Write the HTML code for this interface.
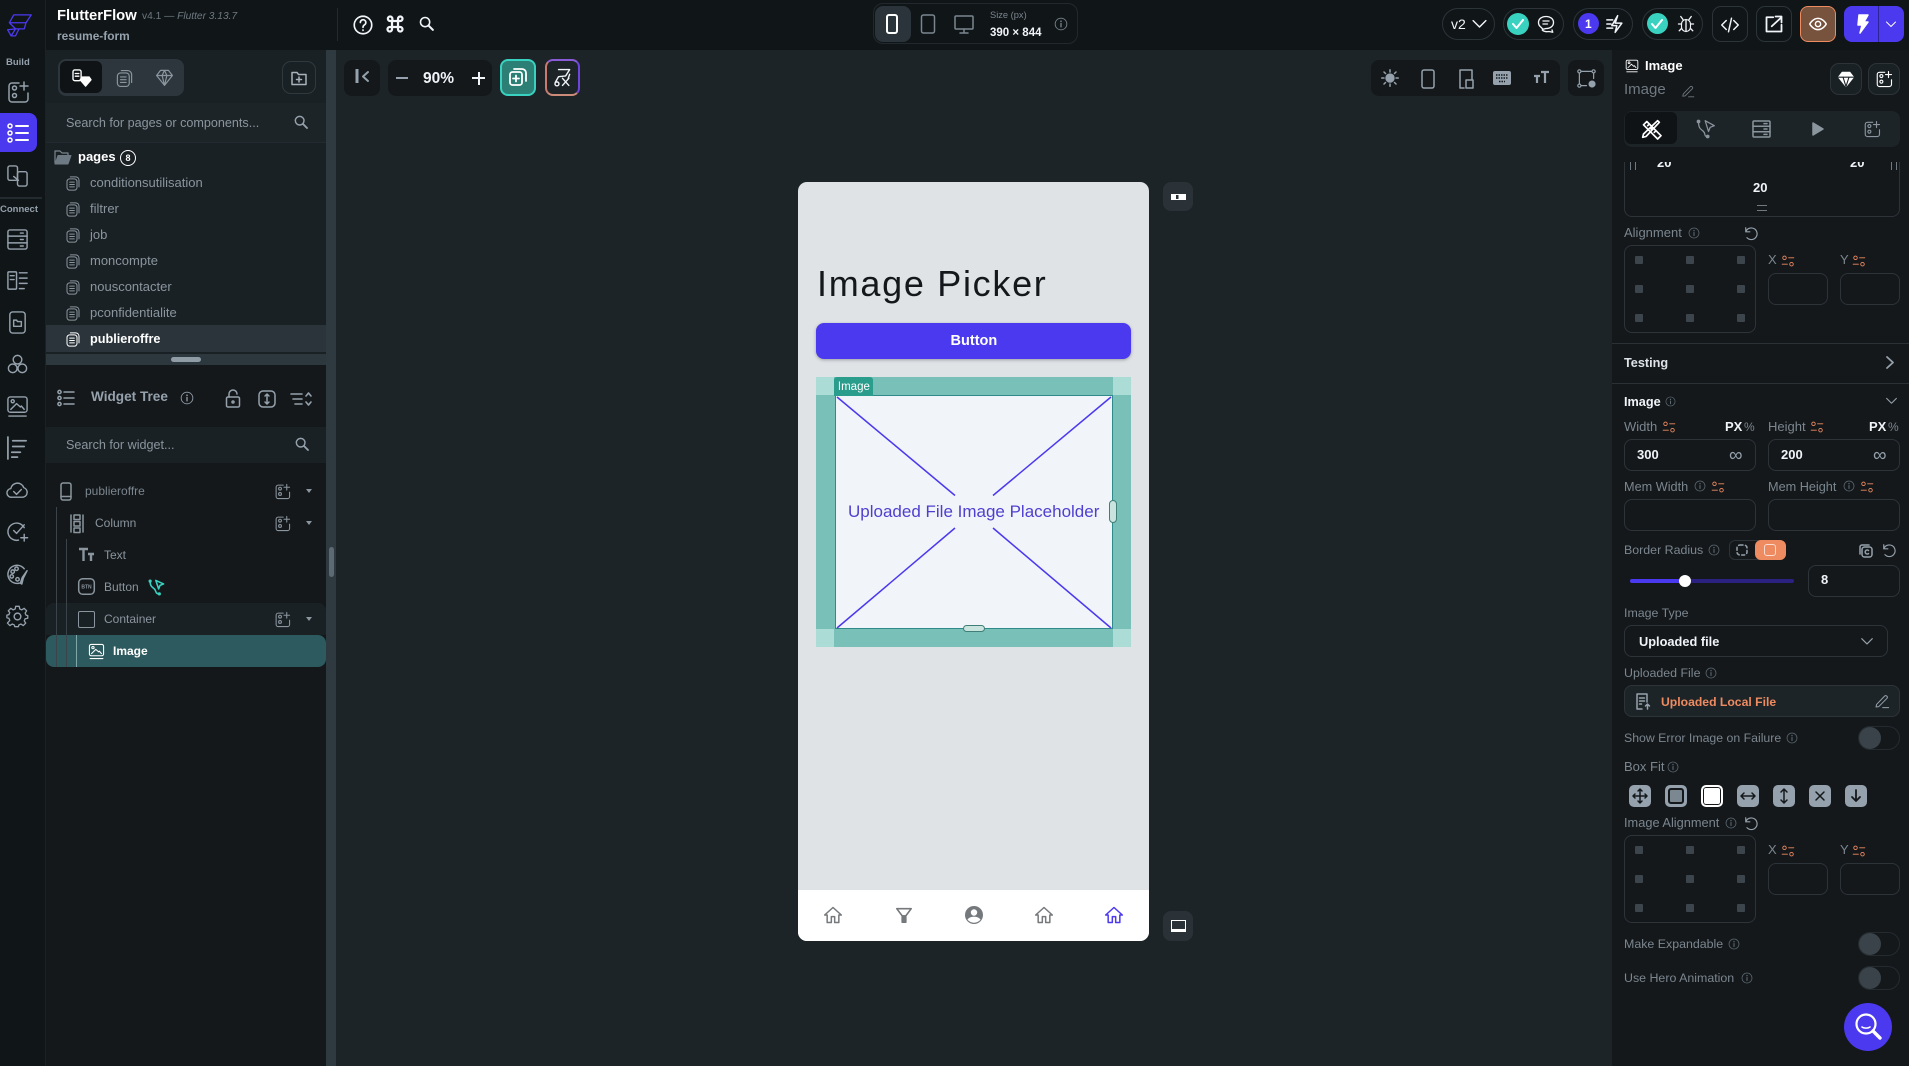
<!DOCTYPE html>
<html><head><meta charset="utf-8"><title>FlutterFlow</title>
<style>
html,body{margin:0;padding:0;width:1909px;height:1066px;overflow:hidden;background:#1d2428}
body{position:relative;font-family:"Liberation Sans",sans-serif;color:#95a1ac}
div,span.t,svg{position:absolute}
.t{position:absolute;white-space:nowrap;line-height:20px;height:20px;font-size:13px}
.b{font-weight:700}
.w{color:#fff}
.g{color:#8a959e}
.d{color:#7b868f}
svg{fill:none;stroke:currentColor;stroke-width:1.5;stroke-linecap:round;stroke-linejoin:round;overflow:visible}
.o{color:#ee8b60}
.box{border:1px solid #2c343a;border-radius:8px;box-sizing:border-box}
.dot{width:8px;height:8px;background:#3c454c;border-radius:1px}
.sw{width:42px;height:24px;border:1px solid #242b30;border-radius:12px;box-sizing:border-box}
.sw:after{content:"";position:absolute;left:0;top:0;width:22px;height:22px;border-radius:50%;background:#3a434a}
.fit{width:22px;height:22px;background:#95a1ac;border-radius:5px;top:785px;color:#14181b}
</style></head><body>
<svg width="0" height="0" style="left:0;top:0"><defs>
<symbol id="cell" viewBox="0 0 24 24"><path d="M13 3H6a3 3 0 0 0-3 3v13a3 3 0 0 0 3 3h13a3 3 0 0 0 3-3v-6"/><circle cx="8.5" cy="8" r="2"/><circle cx="8.5" cy="15.500" r="2"/><path d="M18 2v8M14 6h8"/></symbol>
<symbol id="pg" viewBox="0 0 24 24"><rect x="3" y="5" width="15" height="17" rx="4"/><path d="M8 2h8a5 5 0 0 1 5 5v10M7 10h7M7 13.500h7M7 17h7"/></symbol>
<symbol id="sr" viewBox="0 0 24 24"><circle cx="10" cy="10" r="6.500" stroke-width="2.200"/><path d="M15 15l6 6" stroke-width="2.800"/></symbol>
<symbol id="info" viewBox="0 0 24 24"><circle cx="12" cy="12" r="10"/><path d="M12 11v6" stroke-width="2.200"/><path d="M12 7v.5" stroke-width="2.600"/></symbol>
<symbol id="tune" viewBox="0 0 24 24"><circle cx="6" cy="6.500" r="3"/><path d="M13 6.500h9M2 17.500h9"/><circle cx="18" cy="17.500" r="3"/></symbol>
<symbol id="pen" viewBox="0 0 24 24"><path d="M4 17L16 4.500a2.500 2.500 0 0 1 3.500 3.500L7 20.500l-4 .5zM13 22h9"/></symbol>
<symbol id="chev" viewBox="0 0 24 24"><path d="M3 8l9 9 9-9" stroke-width="2"/></symbol>
<symbol id="img" viewBox="0 0 24 24"><rect x="2" y="2" width="20" height="16" rx="2.500"/><circle cx="7" cy="6.500" r="1.600"/><path d="M5 15l6-6 4 3.500 1-1 3 3.500M3 22h18"/></symbol>
<symbol id="gem" viewBox="0 0 24 24"><path d="M7 3h10l5 6.500L12 22 2 9.500zM2 9.500h20M9 9.500L12 22l3-12.500M9 9.500L12 3l3 6.500"/></symbol>
<symbol id="home" viewBox="0 0 24 24"><path d="M12 3L2 12h3v9h5v-7h4v7h5v-9h3z" stroke-width="1.800"/></symbol>
</defs></svg>

<!-- panels -->
<div style="left:0;top:0;width:1909px;height:50px;background:#101518"></div>
<div style="left:0;top:0;width:46px;height:1066px;background:#101518;border-right:1px solid #1b2226;box-sizing:border-box"></div>
<div style="left:46px;top:50px;width:280px;height:304px;background:#1a2125"></div>
<div style="left:46px;top:103px;width:280px;height:39px;background:#1d2428"></div>
<div style="left:46px;top:142px;width:280px;height:1px;background:#232b30"></div>
<div style="left:46px;top:325px;width:280px;height:27px;background:#2a343a"></div>
<div style="left:46px;top:354px;width:280px;height:11px;background:#2c383e"></div>
<div style="left:171px;top:357px;width:30px;height:5px;border-radius:3px;background:#8f9ca6"></div>
<div style="left:46px;top:365px;width:280px;height:701px;background:#14181b"></div>
<div style="left:326px;top:50px;width:10px;height:1016px;background:#2f3a40"></div>
<div style="left:329px;top:547px;width:5px;height:30px;border-radius:3px;background:#5d6a73"></div>
<div style="left:1612px;top:50px;width:297px;height:1016px;background:#14181b"></div>

<!-- rail -->
<svg style="left:5px;top:11px;color:#4b39ef" width="28" height="27" viewBox="0 0 32 30"><path d="M10 4h20l-6 9H5zM5 13l7 7h10l2-7M12 20l-5 8-4-7zM12 20l-5 8h5l4-8"/></svg>
<span class="t b" style="left:6px;top:53px;font-size:9.500px;color:#95a1ac">Build</span>
<svg style="left:6px;top:80px;color:#95a1ac" width="24" height="24"><use href="#cell"/></svg>
<div style="left:0;top:113px;width:37px;height:39px;background:#4b39ef;border-radius:0 8px 8px 0"></div>
<svg style="left:6px;top:121px;color:#fff" width="24" height="24" viewBox="0 0 24 24"><circle cx="4" cy="5" r="2"/><circle cx="4" cy="12" r="2"/><circle cx="4" cy="19" r="2"/><path d="M10 5h12M10 12h12M10 19h12" stroke-width="2"/></svg>
<svg style="left:6px;top:164px;color:#95a1ac" width="23" height="23" viewBox="0 0 24 24"><rect x="2" y="2" width="10" height="15" rx="2"/><rect x="12" y="8" width="10" height="15" rx="2" /><path d="M8 13l5 4"/></svg>
<div style="left:0;top:197px;width:42px;height:2px;background:#232b30"></div>
<span class="t b" style="left:0;top:200px;font-size:9.500px;color:#95a1ac">Connect</span>
<svg style="left:6px;top:228px;color:#95a1ac" width="23" height="23" viewBox="0 0 24 24"><rect x="2" y="2" width="20" height="20" rx="2"/><path d="M2 8.500h20M2 15.500h20M15 5.300h3M15 12h3M15 18.800h3"/></svg>
<svg style="left:6px;top:269px;color:#95a1ac" width="23" height="23" viewBox="0 0 24 24"><rect x="2" y="3" width="9" height="18" rx="1"/><path d="M4.500 7h4M4.500 11h4M14 4h8M14 9.500h8M14 15h8M14 20.500h5"/></svg>
<svg style="left:6px;top:311px;color:#95a1ac" width="23" height="23" viewBox="0 0 24 24"><rect x="4" y="1" width="16" height="22" rx="3"/><path d="M8 9.500h3l1 1.500h4v5H8z"/></svg>
<svg style="left:6px;top:353px;color:#95a1ac" width="23" height="23" viewBox="0 0 24 24"><circle cx="12" cy="7" r="4.500"/><circle cx="7" cy="16" r="4.500"/><circle cx="17" cy="16" r="4.500"/></svg>
<svg style="left:6px;top:395px;color:#95a1ac" width="23" height="23"><use href="#img"/></svg>
<svg style="left:6px;top:436px;color:#95a1ac" width="23" height="23" viewBox="0 0 24 24"><path d="M2 1v23M7 5h14M7 11h12M6 17h9M6 22h6" stroke-width="1.800"/></svg>
<svg style="left:6px;top:479px;color:#95a1ac" width="23" height="23" viewBox="0 0 24 24"><path d="M6 19a4.500 4.500 0 0 1-1-9 7 7 0 0 1 13.500-1A5.200 5.200 0 0 1 18 19zM8 13l3 3 5-5"/></svg>
<svg style="left:6px;top:520px;color:#95a1ac" width="23" height="23" viewBox="0 0 24 24"><path d="M19 8a9 9 0 1 0-6 13M8 11l3 3 8-9M19 15v7M15.500 18.500h7"/></svg>
<svg style="left:6px;top:563px;color:#95a1ac" width="23" height="23" viewBox="0 0 24 24"><path d="M14 21A9.500 9.500 0 1 1 19 6"/><circle cx="7" cy="9" r="1.800"/><circle cx="6" cy="14" r="1.800"/><circle cx="11" cy="6" r="1.800"/><circle cx="12" cy="17" r="1.800"/><path d="M22 8l-4 8-1.500 6-1.500-1 2-6z"/></svg>
<svg style="left:6px;top:605px;color:#95a1ac" width="23" height="23" viewBox="0 0 24 24"><circle cx="12" cy="12" r="3.500"/><path d="M10 2h4l.6 3 2.400 1 2.600-1.700 2.800 2.800L20.700 9.700l1 2.300 2 .5v3l-3 .6-1 2.400 1.700 2.500-2.800 2.800-2.600-1.700-2.400 1-.6 2h-4l-.6-2-2.400-1-2.600 1.700-2.800-2.800L3.300 18 2.300 15.500 0 15v-3l2.300-.5 1-2.300L1.600 7.100l2.800-2.800L7 6l2.400-1z" transform="scale(.92) translate(1 -.5)"/></svg>

<!-- header -->
<span class="t b w" style="left:57px;top:5.500px;font-size:14.800px">FlutterFlow</span>
<span class="t" style="left:142px;top:6.500px;font-size:10.200px;color:#6f7a82">v4.1 — <i>Flutter 3.13.7</i></span>
<span class="t b" style="left:57px;top:26px;font-size:11.900px;color:#95a1ac">resume-form</span>
<div style="left:337px;top:8px;width:1px;height:33px;background:#232b30"></div>
<svg style="left:353px;top:15px;color:#f1f4f8" width="20" height="20" viewBox="0 0 24 24"><circle cx="12" cy="12" r="10.500" stroke-width="2"/><path d="M8.800 9a3.300 3.300 0 1 1 5 2.800c-1.200.8-1.800 1.500-1.800 3M12 18v.5" stroke-width="2"/></svg>
<svg style="left:386px;top:15px;color:#f1f4f8" width="18" height="18" viewBox="0 0 24 24"><path d="M8 8h8v8H8zM8 8H5.500a3 3 0 1 1 3-3v3M16 8V5a3 3 0 1 1 3 3h-3M16 16h3a3 3 0 1 1-3 3v-3M8 16v3a3 3 0 1 1-3-3h3" stroke-width="3"/></svg>
<svg style="left:418px;top:15px;color:#f1f4f8" width="17" height="17"><use href="#sr"/></svg>

<!-- device group -->
<div class="box" style="left:873px;top:3px;width:205px;height:41px;border-radius:10px;border-color:#22292e"></div>
<div style="left:875px;top:6px;width:36px;height:36px;background:#2a343a;border-radius:8px"></div>
<svg style="left:883px;top:14px;color:#fff" width="18" height="20" viewBox="0 0 18 20"><rect x="4" y="1" width="10" height="18" rx="2" stroke-width="2"/></svg>
<svg style="left:919px;top:14px;color:#7b868f" width="18" height="20" viewBox="0 0 18 20"><rect x="2.500" y="1" width="13" height="18" rx="2"/></svg>
<svg style="left:954px;top:15px;color:#7b868f" width="20" height="20" viewBox="0 0 20 20"><rect x="1" y="1" width="18" height="13" rx="1"/><path d="M10 14v3M6 18h8"/></svg>
<span class="t" style="left:990px;top:5px;font-size:9.300px;color:#7b868f">Size (px)</span>
<span class="t b" style="left:990px;top:23px;font-size:11.500px;color:#f1f4f8">390 × 844</span>
<svg style="left:1054px;top:17px;color:#7b868f" width="14" height="14"><use href="#info"/></svg>

<!-- right header controls -->
<div class="box" style="left:1442px;top:8px;width:53px;height:32px;border-radius:16px"></div>
<span class="t" style="left:1451px;top:14px;font-size:14px;color:#f1f4f8">v2</span>
<svg style="left:1471px;top:15px;color:#f1f4f8" width="17" height="17"><use href="#chev"/></svg>
<div class="box" style="left:1503px;top:8px;width:61px;height:32px;border-radius:16px"></div>
<div style="left:1507px;top:13px;width:22px;height:22px;border-radius:50%;background:#39d2c0"></div>
<svg style="left:1511px;top:17px;color:#fff" width="14" height="14" viewBox="0 0 14 14"><path d="M2 7l3.500 4L12 3" stroke-width="2"/></svg>
<svg style="left:1537px;top:15px;color:#f1f4f8" width="18" height="18" viewBox="0 0 24 24"><path d="M12 2c5.500 0 10 3 10 8s-4.500 8-10 8l-4 1-3-3C3 14.500 2 12.500 2 10c0-5 4.500-8 10-8zM8 8h8M8 12h6M7 20c2 2 6 2.500 9 2l5 1-1-3" stroke-width="1.800"/></svg>
<div class="box" style="left:1573px;top:8px;width:60px;height:32px;border-radius:16px"></div>
<div style="left:1578px;top:13px;width:21px;height:21px;border-radius:50%;background:#4b39ef"></div>
<span class="t b w" style="left:1585px;top:14px;font-size:12px">1</span>
<svg style="left:1606px;top:14px;color:#f1f4f8" width="20" height="20" viewBox="0 0 24 24"><path d="M14 2l-3 9h8l-8 11 2-8H7zM1 7h7M1 12h5M1 17h7" stroke-width="1.800"/></svg>
<div class="box" style="left:1642px;top:8px;width:61px;height:32px;border-radius:16px"></div>
<div style="left:1647px;top:13px;width:21px;height:21px;border-radius:50%;background:#39d2c0"></div>
<svg style="left:1650px;top:17px;color:#fff" width="14" height="14" viewBox="0 0 14 14"><path d="M2 7l3.500 4L12 3" stroke-width="2"/></svg>
<svg style="left:1677px;top:15px;color:#f1f4f8" width="18" height="18" viewBox="0 0 24 24"><rect x="6" y="6" width="12" height="16" rx="6"/><path d="M12 6v16M6 12H2M18 12h4M6 18l-3 3M18 18l3 3M8 6L5 2M16 6l3-4" stroke-width="1.800"/></svg>
<div class="box" style="left:1712px;top:6px;width:36px;height:36px;border-radius:9px"></div>
<svg style="left:1721px;top:16px;color:#f1f4f8" width="18" height="18" viewBox="0 0 24 24"><path d="M7 6l-6 6 6 6M17 6l6 6-6 6M14 3l-4 18" stroke-width="2"/></svg>
<div class="box" style="left:1756px;top:6px;width:36px;height:36px;border-radius:9px"></div>
<svg style="left:1765px;top:15px;color:#f1f4f8" width="18" height="18" viewBox="0 0 24 24"><path d="M11 3H2v19h20v-9" stroke-width="2.400"/><path d="M9 15L22 3M14 2h8v8" stroke-width="2.400"/></svg>
<div style="left:1800px;top:6px;width:36px;height:36px;box-sizing:border-box;border-radius:8px;background:#77523d;border:1.500px solid #ee8b60"></div>
<svg style="left:1809px;top:15px;color:#fff" width="18" height="18" viewBox="0 0 24 24"><path d="M1 12s4-7.500 11-7.500S23 12 23 12s-4 7.500-11 7.500S1 12 1 12z" stroke-width="2"/><circle cx="12" cy="12" r="3.500" stroke-width="2"/></svg>
<div style="left:1844px;top:6px;width:60px;height:36px;border-radius:8px;background:#4b39ef"></div>
<div style="left:1878px;top:6px;width:1px;height:36px;background:#2f2399"></div>
<svg style="left:1855px;top:14px;color:#fff;fill:#fff" width="16" height="20" viewBox="0 0 16 20"><path d="M4 1h9L9 8h4L5 19l2-8H3z" fill="#fff"/></svg>
<svg style="left:1885px;top:18px;color:#fff" width="12" height="12"><use href="#chev"/></svg>

<!-- left panel top -->
<div style="left:58px;top:59px;width:126px;height:37px;border-radius:8px;background:#2c363c"></div>
<div style="left:60px;top:61px;width:42px;height:32px;border-radius:6px;background:#0f1315"></div>
<svg style="left:72px;top:69px;color:#fff" width="20" height="18" viewBox="0 0 22 20"><rect x="1" y="1" width="9" height="12" rx="2"/><path d="M3.500 5h4M3.500 8h4"/><path d="M11 9h8l2 3-6 7-6-7z" fill="#fff" stroke="#fff"/></svg>
<svg style="left:115px;top:69px;color:#8a959e" width="19" height="19"><use href="#pg"/></svg>
<svg style="left:155px;top:68px;color:#8a959e" width="19" height="19"><use href="#gem"/></svg>
<div class="box" style="left:282px;top:61px;width:34px;height:33px;border-radius:9px;border-color:#2f3a40"></div>
<svg style="left:291px;top:70px;color:#a8b2ba" width="16" height="16" viewBox="0 0 16 16"><path d="M1 2.500h5l1.500 2H15v10H1zM8 7v5M5.500 9.500h5"/></svg>
<span class="t g" style="left:66px;top:113px;font-size:12.600px">Search for pages or components...</span>
<svg style="left:293px;top:114px;color:#95a1ac" width="16" height="16"><use href="#sr"/></svg>

<svg style="left:54px;top:149px;color:#7b868f" width="18" height="16" viewBox="0 0 18 16"><path d="M1 14V2h5l2 2h6v2" stroke-width="1.200"/><path d="M4 6.500h13L14 15H1z" fill="#6e7a83" stroke="#6e7a83" stroke-width="1"/></svg>
<span class="t b w" style="left:78px;top:147px">pages</span>
<div style="left:120px;top:150px;width:14px;height:14px;border:1.300px solid #fff;border-radius:50%;font-size:9px;color:#fff;text-align:center;line-height:14px;font-weight:700">8</div>

<svg style="left:65px;top:175px;color:#8a959e" width="16" height="17"><use href="#pg"/></svg>
<span class="t g" style="left:90px;top:173px">conditionsutilisation</span>
<svg style="left:65px;top:201px;color:#8a959e" width="16" height="17"><use href="#pg"/></svg>
<span class="t g" style="left:90px;top:199px">filtrer</span>
<svg style="left:65px;top:227px;color:#8a959e" width="16" height="17"><use href="#pg"/></svg>
<span class="t g" style="left:90px;top:225px">job</span>
<svg style="left:65px;top:253px;color:#8a959e" width="16" height="17"><use href="#pg"/></svg>
<span class="t g" style="left:90px;top:251px">moncompte</span>
<svg style="left:65px;top:279px;color:#8a959e" width="16" height="17"><use href="#pg"/></svg>
<span class="t g" style="left:90px;top:277px">nouscontacter</span>
<svg style="left:65px;top:305px;color:#8a959e" width="16" height="17"><use href="#pg"/></svg>
<span class="t g" style="left:90px;top:303px">pconfidentialite</span>
<svg style="left:65px;top:331px;color:#fff" width="16" height="17"><use href="#pg"/></svg>
<span class="t b w" style="left:90px;top:329px;font-size:12.700px">publieroffre</span>

<!-- widget tree -->
<svg style="left:57px;top:389px;color:#95a1ac" width="18" height="18" viewBox="0 0 18 18"><circle cx="2.500" cy="3" r="1.600"/><circle cx="2.500" cy="9" r="1.600"/><circle cx="2.500" cy="15" r="1.600"/><path d="M7 3h10M7 9h10M7 15h10"/></svg>
<span class="t b" style="left:91px;top:387px;font-size:13.600px;color:#95a1ac">Widget Tree</span>
<svg style="left:180px;top:391px;color:#95a1ac" width="14" height="14"><use href="#info"/></svg>
<svg style="left:225px;top:390px;color:#95a1ac" width="16" height="18" viewBox="0 0 16 18"><rect x="1.500" y="7" width="13" height="10" rx="1.500"/><path d="M4 7V4a4 4 0 0 1 8 0"/><circle cx="8" cy="12" r="1"/></svg>
<svg style="left:258px;top:390px;color:#95a1ac" width="18" height="18" viewBox="0 0 18 18"><rect x="1" y="1" width="16" height="16" rx="4"/><path d="M9 4v10M7 6l2-2 2 2M7 12l2 2 2-2"/></svg>
<svg style="left:290px;top:390px;color:#95a1ac" width="22" height="18" viewBox="0 0 22 18"><path d="M1 4h11M3 9h9M5 14h7M16 6l2.500-3L21 6M16 12l2.500 3 2.500-3" stroke-width="1.600"/></svg>
<div style="left:46px;top:427px;width:280px;height:36px;background:#1a2125"></div>
<span class="t g" style="left:66px;top:435px;font-size:12.600px">Search for widget...</span>
<svg style="left:294px;top:436px;color:#95a1ac" width="16" height="16"><use href="#sr"/></svg>

<div style="left:46px;top:603px;width:280px;height:32px;background:#1a2125;border-radius:8px 8px 0 0"></div>
<div style="left:46px;top:635px;width:280px;height:32px;background:#2d5a5e;border-radius:8px"></div>
<div style="left:56px;top:507px;width:1px;height:160px;background:#3a444a"></div>
<div style="left:66px;top:539px;width:1px;height:128px;background:#3a444a"></div>
<div style="left:76px;top:635px;width:1px;height:32px;background:#7fa6a8"></div>

<svg style="left:59px;top:482px;color:#8a959e" width="14" height="19" viewBox="0 0 14 19"><rect x="2" y="1" width="10" height="17" rx="2"/><path d="M2 14.500h10" stroke-width="1.500"/></svg>
<span class="t" style="left:85px;top:481px;font-size:12px;color:#7b868f">publieroffre</span>
<svg style="left:274px;top:483px;color:#8a959e" width="17" height="17"><use href="#cell"/></svg>
<svg style="left:306px;top:489px;color:#8a959e" width="6" height="4" viewBox="0 0 6 4"><path d="M0 0h6L3 4z" fill="#8a959e" stroke="none"/></svg>

<svg style="left:70px;top:514px;color:#8a959e" width="14" height="19" viewBox="0 0 14 19"><path d="M1 1v17M13 1v17"/><rect x="4" y="1" width="6" height="4.500"/><rect x="4" y="7.500" width="6" height="4.500"/><rect x="4" y="14" width="6" height="4.500"/></svg>
<span class="t" style="left:95px;top:513px;font-size:12px;color:#8a959e">Column</span>
<svg style="left:274px;top:515px;color:#8a959e" width="17" height="17"><use href="#cell"/></svg>
<svg style="left:306px;top:521px" width="6" height="4" viewBox="0 0 6 4"><path d="M0 0h6L3 4z" fill="#8a959e" stroke="none"/></svg>

<svg style="left:78px;top:547px;color:#8a959e" width="17" height="15" viewBox="0 0 17 15"><path d="M1 2h9M5.500 2v12M10 7h6M13 7v7" stroke-width="2.400" stroke-linecap="butt"/></svg>
<span class="t" style="left:104px;top:545px;font-size:12px;color:#8a959e">Text</span>
<svg style="left:78px;top:578px;color:#8a959e" width="17" height="17" viewBox="0 0 17 17"><rect x=".7" y=".7" width="15.600" height="15.600" rx="4"/><text x="8.500" y="10.500" font-size="5" font-family="Liberation Sans" text-anchor="middle" fill="#8a959e" stroke="none" font-weight="700">BTN</text></svg>
<span class="t" style="left:104px;top:577px;font-size:12px;color:#8a959e">Button</span>
<svg style="left:148px;top:579px;color:#39d2c0" width="17" height="17" viewBox="0 0 24 24"><path d="M3 3c0 8 3 8 6 11s1 7 7 7M11 2l11 5-5 2-2 5z" stroke-width="2.200"/><circle cx="3" cy="3" r="1.500" fill="#39d2c0"/><circle cx="16" cy="21" r="1.500" fill="#39d2c0"/></svg>
<div style="left:78px;top:611px;width:17px;height:17px;border:1px solid #8a959e;border-radius:2px;box-sizing:border-box"></div>
<span class="t" style="left:104px;top:609px;font-size:12px;color:#8a959e">Container</span>
<svg style="left:274px;top:611px;color:#8a959e" width="17" height="17"><use href="#cell"/></svg>
<svg style="left:306px;top:617px" width="6" height="4" viewBox="0 0 6 4"><path d="M0 0h6L3 4z" fill="#8a959e" stroke="none"/></svg>
<svg style="left:88px;top:643px;color:#fff" width="17" height="17"><use href="#img"/></svg>
<span class="t b w" style="left:113px;top:641px;font-size:12px">Image</span>

<!-- canvas toolbar -->
<div style="left:344px;top:60px;width:36px;height:36px;background:#14181b;border-radius:8px"></div>
<svg style="left:354px;top:68px;color:#95a1ac" width="18" height="18" viewBox="0 0 18 18"><path d="M3 1v14" stroke-width="3" stroke-linecap="butt"/><path d="M14 4L9 8.500l5 4.500" stroke-width="2"/></svg>
<div style="left:388px;top:60px;width:104px;height:36px;background:#14181b;border-radius:8px"></div>
<div style="left:396px;top:77px;width:12px;height:2px;background:#95a1ac"></div>
<span class="t b" style="left:423px;top:69px;font-size:15.500px;color:#f1f4f8">90%</span>
<div style="left:472px;top:77px;width:13px;height:2px;background:#f1f4f8"></div>
<div style="left:477.500px;top:71.500px;width:2px;height:13px;background:#f1f4f8"></div>
<div style="left:500px;top:59px;width:36px;height:37px;box-sizing:border-box;border-radius:8px;background:#2b7f74;border:2px solid #39d2c0"></div>
<svg style="left:509px;top:68px;color:#fff" width="18" height="18" viewBox="0 0 18 18"><rect x="1" y="4" width="12" height="13" rx="2.500" stroke-width="1.800"/><path d="M5 1h8a4 4 0 0 1 4 4v8M7 7.500v6M4 10.500h6" stroke-width="1.800"/></svg>
<div style="left:545px;top:59px;width:35px;height:37px;box-sizing:border-box;border-radius:8px;border:2px solid;border-color:#8a5bd6 #6c45dc #cc8a78 #cc7a6f"></div>
<svg style="left:553px;top:68px;color:#f1f4f8" width="19" height="19" viewBox="0 0 24 24"><path d="M7 2h14l-5 8-9 1-4 7M21 8l-2 6M12 13l8 9M20 13l-8 9" stroke-width="1.800"/><circle cx="5" cy="20" r="2.500" stroke-width="1.800"/></svg>

<div style="left:1371px;top:60px;width:189px;height:36px;background:#14181b;border-radius:8px"></div>
<svg style="left:1381px;top:69px;color:#95a1ac" width="18" height="18" viewBox="0 0 24 24"><circle cx="12" cy="12" r="5.500" fill="#95a1ac"/><path d="M12 1v3M12 20v3M1 12h3M20 12h3M4 4l2 2M18 18l2 2M4 20l2-2M18 6l2-2" stroke-width="2"/></svg>
<svg style="left:1420px;top:69px;color:#95a1ac" width="16" height="20" viewBox="0 0 16 20"><rect x="2" y="1" width="12" height="18" rx="2"/></svg>
<svg style="left:1458px;top:69px;color:#95a1ac" width="16" height="20" viewBox="0 0 16 20"><path d="M6 19H2V1h12v9"/><rect x="8" y="11" width="7" height="8"/></svg>
<svg style="left:1493px;top:71px;color:#95a1ac" width="18" height="14" viewBox="0 0 18 14"><rect width="18" height="14" rx="2" fill="#95a1ac" stroke="none"/><path d="M3 4h12M3 7h12M6 10.500h6" stroke="#14181b" stroke-dasharray="1.500 1" stroke-linecap="butt"/></svg>
<svg style="left:1533px;top:69px;color:#95a1ac" width="17" height="16" viewBox="0 0 17 16"><path d="M8 3h8M12 3v11M1 7h6M4 7v7" stroke-width="2.200" stroke-linecap="butt"/></svg>
<div style="left:1568px;top:60px;width:36px;height:36px;background:#14181b;border-radius:8px"></div>
<svg style="left:1577px;top:69px;color:#95a1ac" width="19" height="19" viewBox="0 0 24 24"><rect x="1" y="1" width="4" height="4" rx="2"/><rect x="19" y="1" width="4" height="4" rx="2"/><rect x="1" y="19" width="4" height="4" rx="2"/><path d="M5 3h14M3 5v14M5 21h7M21 5v7"/><circle cx="19" cy="19" r="3" fill="#95a1ac" stroke-width="3"/></svg>

<!-- phone -->
<div style="left:798.400px;top:182px;width:351px;height:759px;background:#dfe3e6;border-radius:9px;overflow:hidden">
<div style="left:0;top:708px;width:351px;height:51px;background:#fff"></div>
</div>
<span class="t" style="left:817px;top:267px;font-size:36px;line-height:34px;height:34px;color:#14181b;letter-spacing:1.700px">Image Picker</span>
<div style="left:816.400px;top:323px;width:315px;height:36px;background:#4b39ef;border-radius:8px;box-shadow:0 1px 3px rgba(0,0,0,.3);color:#fff;font-weight:700;font-size:14.500px;text-align:center;line-height:37px">Button</div>
<div style="left:816.400px;top:377px;width:315px;height:270px;background:#79c0b8"></div>
<div style="left:816.400px;top:377px;width:18px;height:18px;background:#acdcd6"></div>
<div style="left:1113.400px;top:377px;width:18px;height:18px;background:#acdcd6"></div>
<div style="left:816.400px;top:629px;width:18px;height:18px;background:#acdcd6"></div>
<div style="left:1113.400px;top:629px;width:18px;height:18px;background:#acdcd6"></div>
<div style="left:835.400px;top:395px;width:278px;height:234px;background:#f1f4f8;border:1.500px solid #2f8a8a;box-sizing:border-box"></div>
<svg style="left:0;top:0;color:#4b39ef" width="1909" height="1066"><path d="M837 397L955 495.500M1111 397L993 495.500M837 628L955 528M1111 628L993 528" stroke-width="1.500" stroke-linecap="butt"/></svg>
<div style="left:834.400px;top:377px;width:39px;height:19px;background:#2a9d8c;border-radius:3px 3px 0 0;color:#fff;font-size:11.500px;line-height:20px;text-align:center">Image</div>
<span class="t" style="left:848px;top:502px;font-size:17px;color:#4e3fd0">Uploaded File Image Placeholder</span>
<div style="left:1109px;top:500px;width:8px;height:23px;box-sizing:border-box;background:#c9e3df;border:1px solid #3f7f78;border-radius:4px"></div>
<div style="left:963px;top:625px;width:22px;height:7px;box-sizing:border-box;background:#c9e3df;border:1px solid #3f7f78;border-radius:4px"></div>
<div style="left:1163px;top:182px;width:30px;height:29px;background:#2a3238;border-radius:8px"></div>
<div style="left:1171px;top:194px;width:15px;height:6px;box-sizing:border-box;border:1.500px solid #fff;background:linear-gradient(90deg,#fff 30%,#2a3238 30%,#2a3238 50%,#fff 50%)"></div>
<div style="left:1163px;top:911px;width:30px;height:30px;background:#2a3238;border-radius:8px"></div>
<div style="left:1171px;top:920px;width:15px;height:12px;box-sizing:border-box;border:1.500px solid #fff;border-bottom-width:3px"></div>

<svg style="left:823px;top:905px;color:#75797c" width="20" height="20"><use href="#home"/></svg>
<svg style="left:895px;top:906px;color:#75797c" width="18" height="18" viewBox="0 0 20 20"><path d="M2 3h16l-6 8v7h-4v-7zM8 11h4v7H8z" stroke-width="1.800"/><path d="M8.500 11h3v7h-3z" fill="#75797c"/></svg>
<svg style="left:964px;top:905px" width="20" height="20" viewBox="0 0 20 20"><circle cx="10" cy="10" r="9" fill="#75797c" stroke="none"/><circle cx="10" cy="7.500" r="3.200" fill="#fff" stroke="none"/><path d="M3.500 14.500c2-2.500 4-2.800 6.500-2.800s4.500.3 6.500 2.800c-1.500 2-4 3.200-6.500 3.200s-5-1.200-6.500-3.200z" fill="#fff" stroke="none"/></svg>
<svg style="left:1034px;top:905px;color:#75797c" width="20" height="20"><use href="#home"/></svg>
<svg style="left:1104px;top:905px;color:#4b39ef" width="20" height="20"><use href="#home"/></svg>

<!-- right panel -->
<svg style="left:1625px;top:59px;color:#fff" width="14" height="14"><use href="#img"/></svg>
<span class="t b w" style="left:1645px;top:56px">Image</span>
<span class="t" style="left:1624px;top:80px;font-size:15px;color:#6f7a82">Image</span>
<svg style="left:1681px;top:84px;color:#6f7a82" width="14" height="14"><use href="#pen"/></svg>
<div class="box" style="left:1830px;top:63px;width:32px;height:32px;border-radius:9px;background:#1a2125"></div>
<svg style="left:1837px;top:70px;color:#fff" width="18" height="18" viewBox="0 0 24 24"><path d="M7 3h10l5 6.500L12 22 2 9.500z" fill="#fff"/><path d="M2 9.500h20M8 9.500L12 22l4-12.500" stroke="#1a2125"/></svg>
<div class="box" style="left:1868px;top:63px;width:32px;height:32px;border-radius:9px;background:#1a2125"></div>
<svg style="left:1875px;top:70px;color:#fff" width="18" height="18"><use href="#cell"/></svg>

<div style="left:1624px;top:111px;width:276px;height:36px;background:#1d2428;border-radius:8px"></div>
<div style="left:1625px;top:112px;width:52px;height:32px;background:#0f1315;border-radius:6px"></div>
<svg style="left:1641px;top:119px;color:#fff" width="20" height="20" viewBox="0 0 24 24"><path d="M3 7l4-4 17 17-4 4zM20 2l2 2L6 21l-4 1 1-4zM8 8l2-2M12 12l2-2M16 16l2-2" stroke-width="2"/></svg>
<svg style="left:1696px;top:119px;color:#8a959e" width="20" height="20" viewBox="0 0 24 24"><circle cx="3" cy="3" r="1.500" fill="#8a959e"/><circle cx="14" cy="21" r="1.500" fill="#8a959e"/><path d="M3 3c0 9 3 9 6 12s0 6 5 6M11 2l11 6-5 2-2 5z"/></svg>
<svg style="left:1752px;top:120px;color:#8a959e" width="19" height="18" viewBox="0 0 19 18"><rect x="1" y="1" width="17" height="16" rx="1"/><path d="M1 6.300h17M1 11.700h17M12 3.600h3M12 9h3M12 14.400h3"/></svg>
<svg style="left:1812px;top:122px;color:#8a959e" width="12" height="14" viewBox="0 0 12 14"><path d="M1 1l10 6-10 6z" fill="#8a959e"/></svg>
<svg style="left:1863px;top:120px;color:#8a959e" width="18" height="18"><use href="#cell"/></svg>

<div style="left:1624px;top:162px;width:276px;height:55px;box-sizing:border-box;border:1px solid #2c343a;border-top:0;border-radius:0 0 8px 8px;overflow:hidden">
<span class="t b" style="left:32px;top:-8px;color:#f1f4f8;font-size:13px;line-height:18px">20</span>
<span class="t b" style="left:225px;top:-8px;color:#f1f4f8;font-size:13px;line-height:18px">20</span>
<span class="t b" style="left:128px;top:15.500px;color:#f1f4f8;font-size:13px">20</span>
<div style="left:5px;top:0;width:4px;height:8px;border-left:1px solid #6f7a82;border-right:1px solid #6f7a82"></div>
<div style="left:266px;top:0;width:4px;height:8px;border-left:1px solid #6f7a82;border-right:1px solid #6f7a82"></div>
<div style="left:132px;top:43px;width:10px;height:4px;border-top:1px solid #6f7a82;border-bottom:1px solid #6f7a82"></div>
</div>
<span class="t d" style="left:1624px;top:223px">Alignment</span>
<svg style="left:1688px;top:227px;color:#5d6a73" width="12" height="12"><use href="#info"/></svg>
<svg style="left:1744px;top:226px;color:#95a1ac" width="14" height="14" viewBox="0 0 24 24"><path d="M3 3v7h7M3 10a10 10 0 1 1 2 10" stroke-width="2"/></svg>
<div class="box" style="left:1624px;top:245px;width:132px;height:88px"></div>
<div class="dot" style="left:1635px;top:256px"></div><div class="dot" style="left:1686px;top:256px"></div><div class="dot" style="left:1737px;top:256px"></div>
<div class="dot" style="left:1635px;top:285px"></div><div class="dot" style="left:1686px;top:285px"></div><div class="dot" style="left:1737px;top:285px"></div>
<div class="dot" style="left:1635px;top:314px"></div><div class="dot" style="left:1686px;top:314px"></div><div class="dot" style="left:1737px;top:314px"></div>
<span class="t d" style="left:1768px;top:250px">X</span>
<svg class="o" style="left:1781px;top:254px" width="14" height="14"><use href="#tune"/></svg>
<span class="t d" style="left:1840px;top:250px">Y</span>
<svg class="o" style="left:1852px;top:254px" width="14" height="14"><use href="#tune"/></svg>
<div class="box" style="left:1768px;top:273px;width:60px;height:32px"></div>
<div class="box" style="left:1840px;top:273px;width:60px;height:32px"></div>

<div style="left:1612px;top:343px;width:297px;height:1px;background:#2a3238"></div>
<span class="t b" style="left:1624px;top:353px;color:#dde3e8;font-size:12.700px">Testing</span>
<svg style="left:1885px;top:356px;color:#95a1ac" width="10" height="13" viewBox="0 0 10 13"><path d="M2 1l6 5.500L2 12" stroke-width="1.800"/></svg>
<div style="left:1612px;top:383px;width:297px;height:1px;background:#2a3238"></div>

<span class="t b" style="left:1624px;top:392px;color:#f1f4f8;font-size:12.700px">Image</span>
<svg style="left:1665px;top:396px;color:#5d6a73" width="11" height="11"><use href="#info"/></svg>
<svg style="left:1885px;top:394px;color:#95a1ac" width="13" height="13"><use href="#chev"/></svg>

<span class="t d" style="left:1624px;top:417px">Width</span>
<svg class="o" style="left:1662px;top:420px" width="14" height="14"><use href="#tune"/></svg>
<span class="t b" style="left:1725px;top:417px;color:#f1f4f8">PX</span>
<span class="t" style="left:1744px;top:417px;font-size:12px;color:#7b868f">%</span>
<span class="t d" style="left:1768px;top:417px">Height</span>
<svg class="o" style="left:1810px;top:420px" width="14" height="14"><use href="#tune"/></svg>
<span class="t b" style="left:1869px;top:417px;color:#f1f4f8">PX</span>
<span class="t" style="left:1888px;top:417px;font-size:12px;color:#7b868f">%</span>
<div class="box" style="left:1624px;top:439px;width:132px;height:32px"></div>
<span class="t b" style="left:1637px;top:445px;color:#f1f4f8">300</span>
<span class="t" style="left:1729px;top:446px;font-size:19px;color:#95a1ac">∞</span>
<div class="box" style="left:1768px;top:439px;width:132px;height:32px"></div>
<span class="t b" style="left:1781px;top:445px;color:#f1f4f8">200</span>
<span class="t" style="left:1873px;top:446px;font-size:19px;color:#95a1ac">∞</span>

<span class="t d" style="left:1624px;top:477px;font-size:12.700px">Mem Width</span>
<svg style="left:1694px;top:480px;color:#5d6a73" width="12" height="12"><use href="#info"/></svg>
<svg class="o" style="left:1711px;top:480px" width="14" height="14"><use href="#tune"/></svg>
<span class="t d" style="left:1768px;top:477px;font-size:12.700px">Mem Height</span>
<svg style="left:1843px;top:480px;color:#5d6a73" width="12" height="12"><use href="#info"/></svg>
<svg class="o" style="left:1860px;top:480px" width="14" height="14"><use href="#tune"/></svg>
<div class="box" style="left:1624px;top:499px;width:132px;height:32px"></div>
<div class="box" style="left:1768px;top:499px;width:132px;height:32px"></div>

<span class="t d" style="left:1624px;top:540px;font-size:12.400px">Border Radius</span>
<svg style="left:1708px;top:544px;color:#5d6a73" width="12" height="12"><use href="#info"/></svg>
<div class="box" style="left:1729px;top:540px;width:57px;height:20px;border-radius:6px"></div>
<svg style="left:1736px;top:544px;color:#95a1ac" width="12" height="12" viewBox="0 0 12 12"><rect x="1" y="1" width="10" height="10" rx="3" stroke-dasharray="3 2.500"/></svg>
<div style="left:1755px;top:540px;width:31px;height:20px;background:#ee8b60;border-radius:6px"></div>
<div style="left:1764px;top:544px;width:12px;height:12px;box-sizing:border-box;border:1.500px solid #f7dccf;border-radius:3px"></div>
<svg style="left:1859px;top:544px;color:#95a1ac" width="14" height="14" viewBox="0 0 14 14"><rect x="3" y="3" width="10" height="10" rx="2.500"/><path d="M1 10V3a2 2 0 0 1 2-2h7M9.500 6.500a2 2 0 1 0 0 3"/></svg>
<svg style="left:1882px;top:543px;color:#95a1ac" width="14" height="14" viewBox="0 0 24 24"><path d="M3 3v7h7M3 10a10 10 0 1 1 2 10" stroke-width="2"/></svg>
<div style="left:1630px;top:579px;width:164px;height:4px;background:#2a2180;border-radius:2px"></div>
<div style="left:1630px;top:579px;width:55px;height:4px;background:#4b39ef;border-radius:2px"></div>
<div style="left:1679px;top:575px;width:12px;height:12px;background:#fff;border-radius:50%"></div>
<div class="box" style="left:1808px;top:565px;width:92px;height:32px"></div>
<span class="t b" style="left:1821px;top:570px;color:#f1f4f8">8</span>

<span class="t d" style="left:1624px;top:603px;font-size:12.400px">Image Type</span>
<div class="box" style="left:1624px;top:625px;width:264px;height:32px"></div>
<span class="t b" style="left:1639px;top:632px;color:#f1f4f8;font-size:12.800px">Uploaded file</span>
<svg style="left:1860px;top:634px;color:#95a1ac" width="14" height="14"><use href="#chev"/></svg>
<span class="t d" style="left:1624px;top:663px;font-size:12.400px">Uploaded File</span>
<svg style="left:1705px;top:667px;color:#5d6a73" width="12" height="12"><use href="#info"/></svg>
<div class="box" style="left:1624px;top:685px;width:276px;height:32px;background:#1d2428"></div>
<svg style="left:1635px;top:693px;color:#95a1ac" width="16" height="17" viewBox="0 0 16 17"><path d="M7 16H2V1h10v8M4.500 5h5M4.500 8h5M4.500 11h2M12.500 16v-5M10.500 13l2-2 2 2"/></svg>
<span class="t b o" style="left:1661px;top:692px;font-size:12.200px">Uploaded Local File</span>
<svg style="left:1874px;top:693px;color:#95a1ac" width="16" height="16"><use href="#pen"/></svg>

<span class="t d" style="left:1624px;top:728px;font-size:12.300px">Show Error Image on Failure</span>
<svg style="left:1786px;top:732px;color:#5d6a73" width="12" height="12"><use href="#info"/></svg>
<div class="sw" style="left:1858px;top:726px"></div>

<span class="t d" style="left:1624px;top:757px">Box Fit</span>
<svg style="left:1667px;top:761px;color:#5d6a73" width="12" height="12"><use href="#info"/></svg>
<div class="fit" style="left:1629px"><svg style="left:3px;top:3px" width="16" height="16" viewBox="0 0 16 16"><path d="M8 1v14M1 8h14M6 3l2-2 2 2M6 13l2 2 2-2M3 6L1 8l2 2M13 6l2 2-2 2"/></svg></div>
<div class="fit" style="left:1665px"><div style="left:3px;top:3px;width:16px;height:16px;box-sizing:border-box;background:#7b8791;border:2px solid #14181b;border-radius:3px"></div></div>
<div class="fit" style="left:1701px;background:#fff;box-sizing:border-box;border:2px solid #fff;box-shadow:inset 0 0 0 1px #14181b"></div>
<div class="fit" style="left:1737px"><svg style="left:3px;top:3px" width="16" height="16" viewBox="0 0 16 16"><path d="M1 8h14M4 5L1 8l3 3M12 5l3 3-3 3"/></svg></div>
<div class="fit" style="left:1773px"><svg style="left:3px;top:3px" width="16" height="16" viewBox="0 0 16 16"><path d="M8 1v14M5 4l3-3 3 3M5 12l3 3 3-3"/></svg></div>
<div class="fit" style="left:1809px"><svg style="left:6px;top:6px" width="10" height="10" viewBox="0 0 10 10"><path d="M1 1l8 8M9 1l-8 8"/></svg></div>
<div class="fit" style="left:1845px"><svg style="left:4px;top:4px" width="14" height="14" viewBox="0 0 14 14"><path d="M7 1v11M3 8l4 4 4-4" stroke-width="1.800"/></svg></div>

<span class="t d" style="left:1624px;top:813px;font-size:12.800px">Image Alignment</span>
<svg style="left:1725px;top:817px;color:#5d6a73" width="12" height="12"><use href="#info"/></svg>
<svg style="left:1744px;top:816px;color:#95a1ac" width="14" height="14" viewBox="0 0 24 24"><path d="M3 3v7h7M3 10a10 10 0 1 1 2 10" stroke-width="2"/></svg>
<div class="box" style="left:1624px;top:835px;width:132px;height:88px"></div>
<div class="dot" style="left:1635px;top:846px"></div><div class="dot" style="left:1686px;top:846px"></div><div class="dot" style="left:1737px;top:846px"></div>
<div class="dot" style="left:1635px;top:875px"></div><div class="dot" style="left:1686px;top:875px"></div><div class="dot" style="left:1737px;top:875px"></div>
<div class="dot" style="left:1635px;top:904px"></div><div class="dot" style="left:1686px;top:904px"></div><div class="dot" style="left:1737px;top:904px"></div>
<span class="t d" style="left:1768px;top:840px">X</span>
<svg class="o" style="left:1781px;top:844px" width="14" height="14"><use href="#tune"/></svg>
<span class="t d" style="left:1840px;top:840px">Y</span>
<svg class="o" style="left:1852px;top:844px" width="14" height="14"><use href="#tune"/></svg>
<div class="box" style="left:1768px;top:863px;width:60px;height:32px"></div>
<div class="box" style="left:1840px;top:863px;width:60px;height:32px"></div>

<span class="t d" style="left:1624px;top:934px;font-size:12.400px">Make Expandable</span>
<svg style="left:1728px;top:938px;color:#5d6a73" width="12" height="12"><use href="#info"/></svg>
<div class="sw" style="left:1858px;top:932px"></div>
<span class="t d" style="left:1624px;top:968px;font-size:12.400px">Use Hero Animation</span>
<svg style="left:1741px;top:972px;color:#5d6a73" width="12" height="12"><use href="#info"/></svg>
<div class="sw" style="left:1858px;top:966px"></div>

<div style="left:1844px;top:1003px;width:48px;height:48px;border-radius:50%;background:#4b39ef"></div>
<svg style="left:1853px;top:1012px;color:#fff" width="30" height="30" viewBox="0 0 30 30"><circle cx="13" cy="12" r="9.500" stroke-width="2.200"/><path d="M9 15c2 1.500 6 1.500 8 0" stroke-width="1.600"/><path d="M20 19l7 7" stroke-width="3.400"/></svg>
</body></html>
